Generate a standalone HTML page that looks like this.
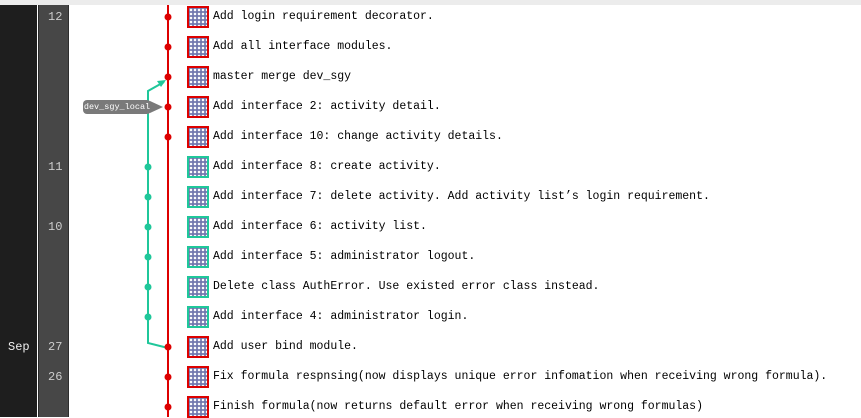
<!DOCTYPE html>
<html><head><style>
body{margin:0;width:861px;height:417px;overflow:hidden;background:#fff;position:relative;font-family:"Liberation Mono",monospace;}
.top{position:absolute;left:0;top:0;width:861px;height:5px;background:#ececec;}
.c1{position:absolute;left:0;top:5px;width:37px;height:412px;background:#1e1e1e;}
.c2{position:absolute;left:38px;top:5px;width:29px;height:412px;background:#474747;border-left:1px solid #2a2a2a;border-right:1px solid #2e2e2e;}
.d{position:absolute;color:#ccc;font-size:12px;}
.t{position:absolute;left:213px;font-size:11.5px;color:#000;white-space:pre;line-height:14px;}
.ic{position:absolute;left:187px;width:18px;height:18px;border:2px solid #d00;background:
radial-gradient(circle,#fff 0 1px,transparent 1.5px) 0 0/4px 4px,#7278ae;}
.g{border-color:#1fc79a;}
.lab{position:absolute;left:83px;top:100px;width:68px;height:14px;background:#7a7a7a;border-radius:4px;color:#fff;font-size:8.5px;line-height:14px;text-align:center;overflow:hidden;white-space:nowrap;}
</style></head><body>
<div class="top"></div><div class="c1"></div><div class="c2"></div>
<div class="d" style="left:48px;top:10px">12</div>
<div class="d" style="left:48px;top:160px">11</div>
<div class="d" style="left:48px;top:220px">10</div>
<div class="d" style="left:8px;top:340px;color:#eee">Sep</div>
<div class="d" style="left:48px;top:340px">27</div>
<div class="d" style="left:48px;top:370px">26</div>
<svg style="position:absolute;left:0;top:0" width="861" height="417">
<line x1="168" y1="5" x2="168" y2="417" stroke="#d00" stroke-width="2"/>
<polyline points="164,82 148,91 148,343 168,348" fill="none" stroke="#1fc79a" stroke-width="2"/>
<polygon points="166,80 157,81 161,87" fill="#1fc79a"/>
<g fill="#d00">
<circle cx="168" cy="17" r="3.5"/><circle cx="168" cy="47" r="3.5"/><circle cx="168" cy="77" r="3.5"/><circle cx="168" cy="107" r="3.5"/><circle cx="168" cy="137" r="3.5"/><circle cx="168" cy="347" r="3.5"/><circle cx="168" cy="377" r="3.5"/><circle cx="168" cy="407" r="3.5"/></g>
<g fill="#1fc79a"><circle cx="148" cy="167" r="3.5"/><circle cx="148" cy="197" r="3.5"/><circle cx="148" cy="227" r="3.5"/><circle cx="148" cy="257" r="3.5"/><circle cx="148" cy="287" r="3.5"/><circle cx="148" cy="317" r="3.5"/></g>
<polygon points="150,101 163,107 150,113" fill="#7a7a7a"/>
</svg>
<div class="lab">dev_sgy_local</div>
<div class="ic" style="top:6px"></div><div class="t" style="top:10px">Add login requirement decorator.</div>
<div class="ic" style="top:36px"></div><div class="t" style="top:40px">Add all interface modules.</div>
<div class="ic" style="top:66px"></div><div class="t" style="top:70px">master merge dev_sgy</div>
<div class="ic" style="top:96px"></div><div class="t" style="top:100px">Add interface 2: activity detail.</div>
<div class="ic" style="top:126px"></div><div class="t" style="top:130px">Add interface 10: change activity details.</div>
<div class="ic g" style="top:156px"></div><div class="t" style="top:160px">Add interface 8: create activity.</div>
<div class="ic g" style="top:186px"></div><div class="t" style="top:190px">Add interface 7: delete activity. Add activity list’s login requirement.</div>
<div class="ic g" style="top:216px"></div><div class="t" style="top:220px">Add interface 6: activity list.</div>
<div class="ic g" style="top:246px"></div><div class="t" style="top:250px">Add interface 5: administrator logout.</div>
<div class="ic g" style="top:276px"></div><div class="t" style="top:280px">Delete class AuthError. Use existed error class instead.</div>
<div class="ic g" style="top:306px"></div><div class="t" style="top:310px">Add interface 4: administrator login.</div>
<div class="ic" style="top:336px"></div><div class="t" style="top:340px">Add user bind module.</div>
<div class="ic" style="top:366px"></div><div class="t" style="top:370px">Fix formula respnsing(now displays unique error infomation when receiving wrong formula).</div>
<div class="ic" style="top:396px"></div><div class="t" style="top:400px">Finish formula(now returns default error when receiving wrong formulas)</div>
</body></html>
